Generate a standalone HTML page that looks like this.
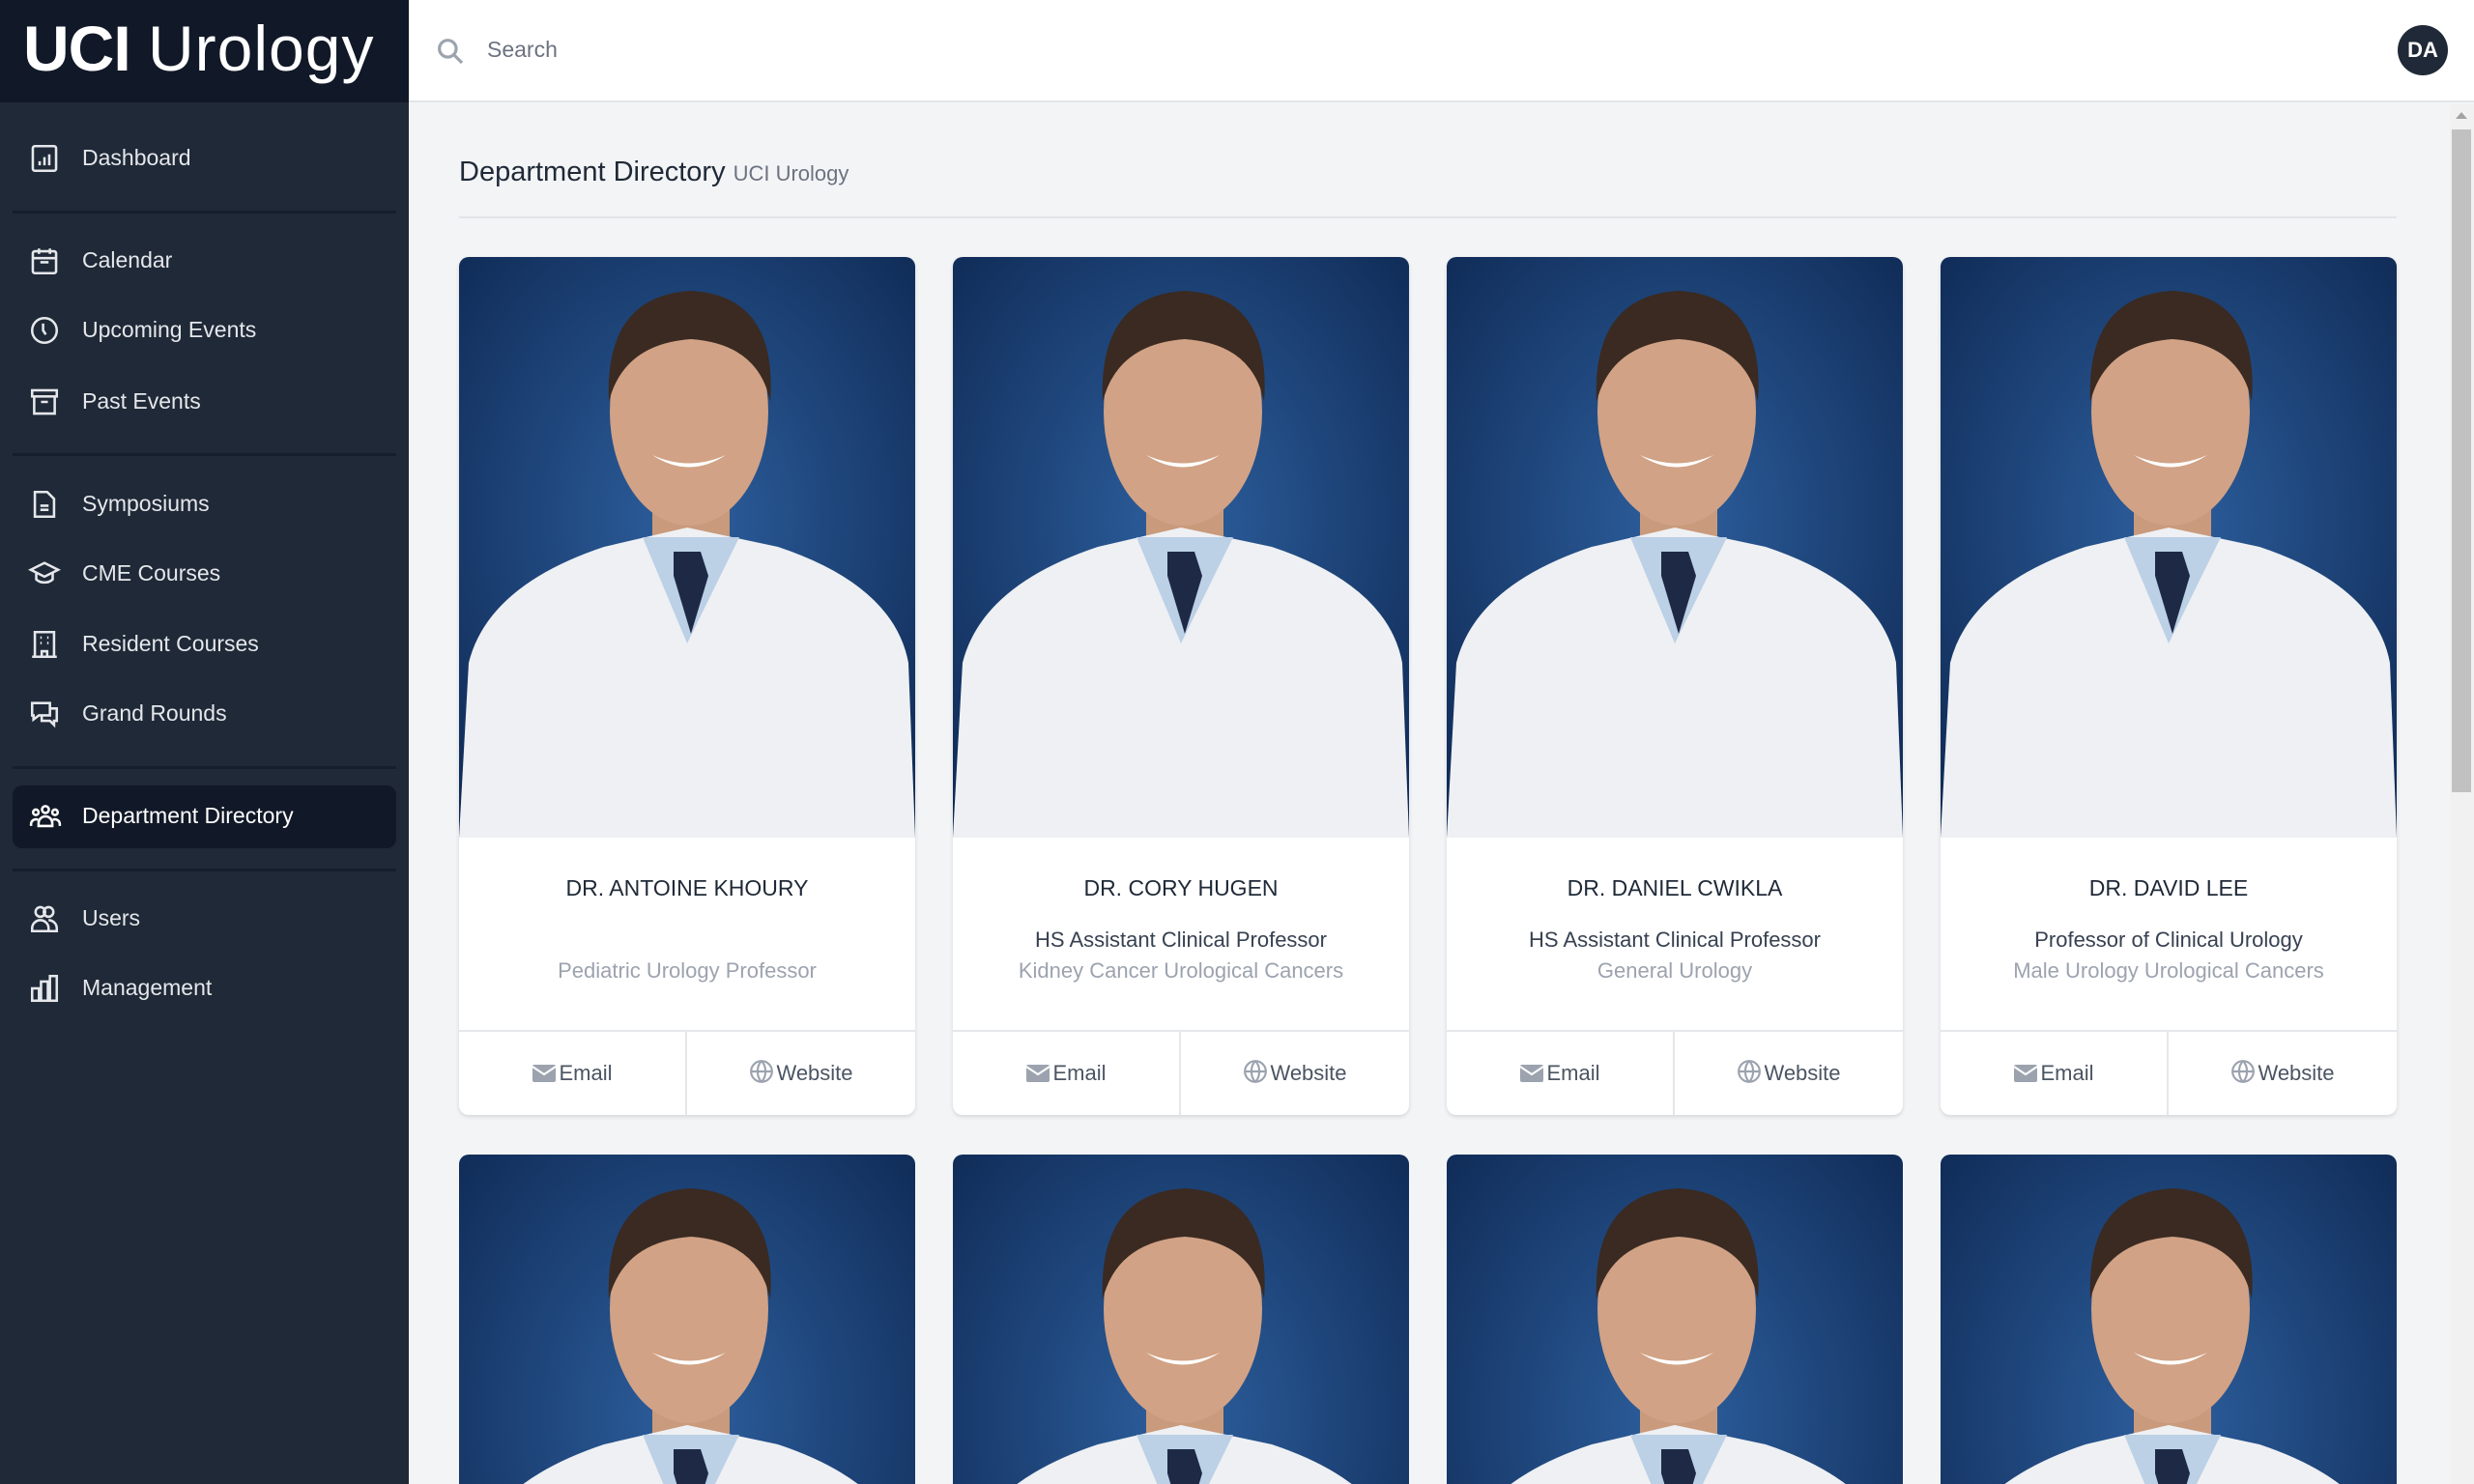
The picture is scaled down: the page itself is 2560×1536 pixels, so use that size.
<!DOCTYPE html>
<html><head><meta charset="utf-8">
<style>
*{margin:0;padding:0;box-sizing:border-box}
html,body{width:2560px;height:1536px;overflow:hidden;background:#f3f4f6;font-family:"Liberation Sans",sans-serif}
#root{position:relative;width:2560px;height:1536px;overflow:hidden;background:#f3f4f6}
.side{position:absolute;left:0;top:0;width:423px;height:1536px;background:#1f2937}
.logo{position:absolute;left:0;top:0;width:423px;height:106px;background:#111827;color:#fff;font-size:66px;line-height:100px;padding-left:24px;white-space:nowrap}
.logo b{font-weight:900;letter-spacing:-1px}
.logo span{font-weight:300;letter-spacing:1px}
.item{position:absolute;left:0;width:423px;height:50px;color:#e5e7eb;font-size:23px;line-height:50px}
.item svg{position:absolute;left:29px;top:9px}
.item .t{position:absolute;left:85px}
.div{position:absolute;left:13px;width:397px;height:3px;background:#161e2b}
.active{position:absolute;left:13px;top:813px;width:397px;height:65px;background:#111827;border-radius:10px}
.top{position:absolute;left:423px;top:0;width:2137px;height:106px;background:#fff;border-bottom:2px solid #e2e4e8}
.avatar{position:absolute;left:2481px;top:26px;width:52px;height:52px;border-radius:50%;background:#1f2937;color:#fff;font-weight:bold;font-size:22px;line-height:52px;text-align:center}
h1{position:absolute;left:475px;top:162px;font-size:29px;font-weight:normal;color:#1f2937;white-space:nowrap}
h1 small{font-size:22px;color:#6b7280;margin-left:8px}
.hr{position:absolute;left:475px;top:224px;width:2005px;height:2px;background:#e2e4e8}
.card{position:absolute;width:472px;height:888px;background:#fff;border-radius:10px;overflow:hidden;box-shadow:0 2px 4px rgba(0,0,0,.12)}
.card.r2{height:341px;border-radius:10px 10px 0 0;box-shadow:none}
.card svg.ph{position:absolute;left:0;top:0}
.name{position:absolute;top:640px;left:0;width:100%;text-align:center;font-size:23px;color:#1f2937}
.l1{position:absolute;top:694px;width:100%;text-align:center;font-size:22px;color:#374151}
.l2{position:absolute;top:726px;width:100%;text-align:center;font-size:22px;color:#9ca3af}
.foot{position:absolute;top:800px;left:0;width:100%;height:88px;border-top:2px solid #e5e7eb}
.foot div{position:absolute;top:0;width:50%;height:86px;line-height:86px;text-align:center;font-size:22px;color:#4b5563}
.foot .b{left:0;border-right:2px solid #e5e7eb}
.foot .c{left:50%}
.foot svg{vertical-align:-4px;margin-right:2px}
.sb{position:absolute;left:2535px;top:108px;width:25px;height:1428px;background:#f1f1f1}
.thumb{position:absolute;left:2537px;top:134px;width:20px;height:686px;background:#c1c1c1}
</style></head><body><div id="root">
<svg width="0" height="0" style="position:absolute">
<defs>
<radialGradient id="bg" cx="50%" cy="45%" r="70%"><stop offset="0" stop-color="#2d5f9e"/><stop offset="1" stop-color="#0f2a55"/></radialGradient>
<symbol id="p" viewBox="0 0 472 601">
<rect width="472" height="601" fill="url(#bg)"/>
<path d="M200 240 L200 320 L280 320 L280 240 Z" fill="#c99a7c"/>
<path d="M0 601 L10 420 Q30 340 150 300 L236 280 L330 300 Q450 340 465 420 L472 601 Z" fill="#eef0f3"/>
<path d="M190 290 L236 400 L290 290 Z" fill="#bcd0e6"/>
<path d="M222 305 L250 305 L258 330 L240 390 L222 330 Z" fill="#1e2a45"/>
<ellipse cx="238" cy="160" rx="82" ry="118" fill="#d1a285"/>
<path d="M155 150 Q150 40 240 35 Q330 40 322 150 Q310 90 240 85 Q170 90 155 150 Z" fill="#3a2a22"/>
<path d="M200 205 Q238 230 276 205 Q238 222 200 205Z" fill="#fff"/>
</symbol>
</defs></svg>

<div class="side">
<div class="logo"><b>UCI</b> <span>Urology</span></div>
<div class="item" style="top:138px"><svg width="34" height="34" viewBox="0 0 24 24" fill="none" stroke="#e5e7eb" stroke-width="1.8"><rect x="3.5" y="3" width="17" height="18" rx="1.5"/><path d="M8.5 17v-3M12 17v-6M15.5 17v-8"/></svg><span class="t">Dashboard</span></div>
<div class="div" style="top:218px"></div>
<div class="item" style="top:244px"><svg width="34" height="34" viewBox="0 0 24 24" fill="none" stroke="#e5e7eb" stroke-width="1.8"><rect x="3.5" y="5" width="17" height="16" rx="1.5"/><path d="M3.5 10h17M8 3v4M16 3v4M9 13h6"/></svg><span class="t">Calendar</span></div>
<div class="item" style="top:316px"><svg width="34" height="34" viewBox="0 0 24 24" fill="none" stroke="#e5e7eb" stroke-width="1.8"><circle cx="12" cy="12" r="9"/><path d="M11 7v5l2 3"/></svg><span class="t">Upcoming Events</span></div>
<div class="item" style="top:390px"><svg width="34" height="34" viewBox="0 0 24 24" fill="none" stroke="#e5e7eb" stroke-width="1.8"><rect x="3" y="3.5" width="18" height="4.5"/><path d="M4.5 8v12.5h15V8M9.5 12h5"/></svg><span class="t">Past Events</span></div>
<div class="div" style="top:469px"></div>
<div class="item" style="top:496px"><svg width="34" height="34" viewBox="0 0 24 24" fill="none" stroke="#e5e7eb" stroke-width="1.8"><path d="M5 3h9l5 5v13H5z"/><path d="M9 13h6M9 16h6"/></svg><span class="t">Symposiums</span></div>
<div class="item" style="top:568px"><svg width="34" height="34" viewBox="0 0 24 24" fill="none" stroke="#e5e7eb" stroke-width="1.8"><path d="M2 9l10-5 10 5-10 5z"/><path d="M6 11v5c3 3 9 3 12 0v-5"/></svg><span class="t">CME Courses</span></div>
<div class="item" style="top:641px"><svg width="34" height="34" viewBox="0 0 24 24" fill="none" stroke="#e5e7eb" stroke-width="1.8"><path d="M5 21V3h14v18M3 21h18M10 21v-4h4v4M9 7h1M14 7h1M9 11h1M14 11h1"/></svg><span class="t">Resident Courses</span></div>
<div class="item" style="top:713px"><svg width="34" height="34" viewBox="0 0 24 24" fill="none" stroke="#e5e7eb" stroke-width="1.8"><path d="M3 4h13v9H8l-4 3v-3H3z"/><path d="M16 8h5v9h-2v3l-3-3h-6v-4"/></svg><span class="t">Grand Rounds</span></div>
<div class="div" style="top:793px"></div>
<div class="active"></div>
<div class="item" style="top:819px;color:#fff"><svg width="36" height="34" viewBox="0 0 24 24" fill="none" stroke="#fff" stroke-width="1.8"><circle cx="12" cy="7" r="2.5"/><circle cx="5" cy="9" r="2"/><circle cx="19" cy="9" r="2"/><path d="M7 19v-2a5 5 0 0110 0v2zM1.5 19v-1.5a3.5 3.5 0 015-3M22.5 19v-1.5a3.5 3.5 0 00-5-3"/></svg><span class="t">Department Directory</span></div>
<div class="div" style="top:899px"></div>
<div class="item" style="top:925px"><svg width="34" height="34" viewBox="0 0 24 24" fill="none" stroke="#e5e7eb" stroke-width="1.8"><circle cx="9" cy="7" r="3.5"/><circle cx="15" cy="7" r="3.5"/><path d="M3 21v-2a6 6 0 0112 0v2zM15 13a6 6 0 016 6v2h-6"/></svg><span class="t">Users</span></div>
<div class="item" style="top:997px"><svg width="34" height="34" viewBox="0 0 24 24" fill="none" stroke="#e5e7eb" stroke-width="1.8"><rect x="3" y="12" width="5" height="9"/><rect x="9.5" y="7" width="5" height="14"/><rect x="16" y="3" width="5" height="18"/></svg><span class="t">Management</span></div>
</div>

<div class="top">
<svg style="position:absolute;left:27px;top:37px" width="32" height="32" viewBox="0 0 24 24" fill="none" stroke="#9ca3af" stroke-width="2.4"><circle cx="10" cy="10" r="6.5"/><path d="M15 15l6 6"/></svg>
<div style="position:absolute;left:81px;top:38px;font-size:23px;color:#6b7280">Search</div>
</div>
<div class="avatar">DA</div>

<h1>Department Directory<small>UCI Urology</small></h1>
<div class="hr"></div>

<div class="card" style="left:475px;top:266px"><svg class="ph" width="472" height="601"><use href="#p"/></svg>
<div class="name">DR. ANTOINE KHOURY</div><div class="l2">Pediatric Urology Professor</div>
<div class="foot"><div class="b"><svg width="26" height="22" viewBox="0 0 26 22"><rect x="1" y="2" width="24" height="18" rx="2" fill="#9ca3af"/><path d="M1 4l12 8 12-8" stroke="#fff" stroke-width="2" fill="none"/></svg>Email</div><div class="c"><svg width="26" height="26" viewBox="0 0 24 24" fill="none" stroke="#9ca3af" stroke-width="2"><circle cx="12" cy="12" r="10"/><path d="M2 12h20M12 2c-5 5-5 15 0 20M12 2c5 5 5 15 0 20"/></svg>Website</div></div></div>

<div class="card" style="left:986px;top:266px"><svg class="ph" width="472" height="601"><use href="#p"/></svg>
<div class="name">DR. CORY HUGEN</div><div class="l1">HS Assistant Clinical Professor</div><div class="l2">Kidney Cancer Urological Cancers</div>
<div class="foot"><div class="b"><svg width="26" height="22" viewBox="0 0 26 22"><rect x="1" y="2" width="24" height="18" rx="2" fill="#9ca3af"/><path d="M1 4l12 8 12-8" stroke="#fff" stroke-width="2" fill="none"/></svg>Email</div><div class="c"><svg width="26" height="26" viewBox="0 0 24 24" fill="none" stroke="#9ca3af" stroke-width="2"><circle cx="12" cy="12" r="10"/><path d="M2 12h20M12 2c-5 5-5 15 0 20M12 2c5 5 5 15 0 20"/></svg>Website</div></div></div>

<div class="card" style="left:1497px;top:266px"><svg class="ph" width="472" height="601"><use href="#p"/></svg>
<div class="name">DR. DANIEL CWIKLA</div><div class="l1">HS Assistant Clinical Professor</div><div class="l2">General Urology</div>
<div class="foot"><div class="b"><svg width="26" height="22" viewBox="0 0 26 22"><rect x="1" y="2" width="24" height="18" rx="2" fill="#9ca3af"/><path d="M1 4l12 8 12-8" stroke="#fff" stroke-width="2" fill="none"/></svg>Email</div><div class="c"><svg width="26" height="26" viewBox="0 0 24 24" fill="none" stroke="#9ca3af" stroke-width="2"><circle cx="12" cy="12" r="10"/><path d="M2 12h20M12 2c-5 5-5 15 0 20M12 2c5 5 5 15 0 20"/></svg>Website</div></div></div>

<div class="card" style="left:2008px;top:266px"><svg class="ph" width="472" height="601"><use href="#p"/></svg>
<div class="name">DR. DAVID LEE</div><div class="l1">Professor of Clinical Urology</div><div class="l2">Male Urology Urological Cancers</div>
<div class="foot"><div class="b"><svg width="26" height="22" viewBox="0 0 26 22"><rect x="1" y="2" width="24" height="18" rx="2" fill="#9ca3af"/><path d="M1 4l12 8 12-8" stroke="#fff" stroke-width="2" fill="none"/></svg>Email</div><div class="c"><svg width="26" height="26" viewBox="0 0 24 24" fill="none" stroke="#9ca3af" stroke-width="2"><circle cx="12" cy="12" r="10"/><path d="M2 12h20M12 2c-5 5-5 15 0 20M12 2c5 5 5 15 0 20"/></svg>Website</div></div></div>

<div class="card r2" style="left:475px;top:1195px"><svg class="ph" width="472" height="341" viewBox="0 0 472 341"><use href="#p" width="472" height="601"/></svg></div>
<div class="card r2" style="left:986px;top:1195px"><svg class="ph" width="472" height="341" viewBox="0 0 472 341"><use href="#p" width="472" height="601"/></svg></div>
<div class="card r2" style="left:1497px;top:1195px"><svg class="ph" width="472" height="341" viewBox="0 0 472 341"><use href="#p" width="472" height="601"/></svg></div>
<div class="card r2" style="left:2008px;top:1195px"><svg class="ph" width="472" height="341" viewBox="0 0 472 341"><use href="#p" width="472" height="601"/></svg></div>

<div class="sb"></div>
<svg style="position:absolute;left:2539px;top:114px" width="16" height="10"><path d="M2 9L8 2l6 7z" fill="#a3a3a3"/></svg>
<div class="thumb"></div>
</div></body></html>
